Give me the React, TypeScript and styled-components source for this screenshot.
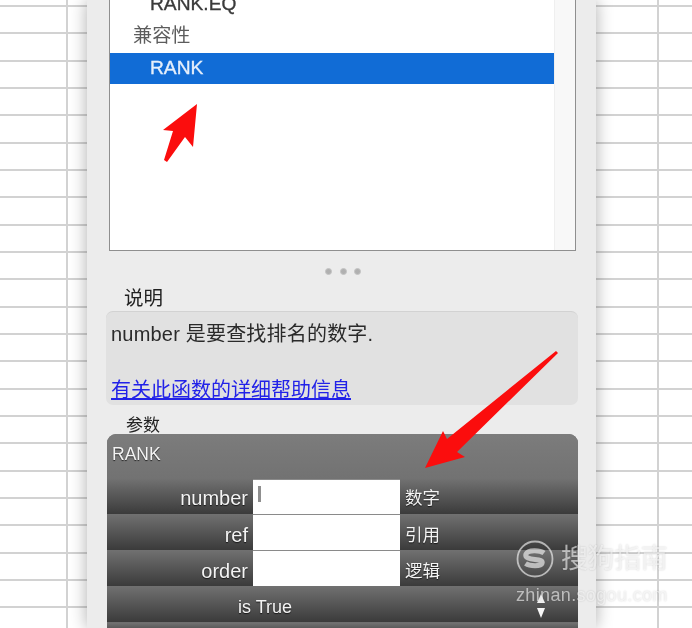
import React from 'react'
import styled, { createGlobalStyle } from 'styled-components'

const Global = createGlobalStyle`
  html, body {
    margin: 0;
    padding: 0;
    background: #fff;
  }
`;

const sans = `"Liberation Sans", "Noto Sans CJK SC", sans-serif`;
const line = '#d2d2d2';

const Sheet = styled.div`
  position: relative;
  width: 692px;
  height: 628px;
  overflow: hidden;
  display: flex;
  justify-content: flex-start;
  padding-left: 87px;
  box-sizing: border-box;
  font-family: ${sans};
  background-color: #fff;
  background-image:
    linear-gradient(to right, transparent 66px, ${line} 66px, ${line} 68px, transparent 68px, transparent 657px, ${line} 657px, ${line} 659px, transparent 659px),
    linear-gradient(to bottom,
      transparent 5px, ${line} 5px, ${line} 7px, transparent 7px,
      transparent 32px, ${line} 32px, ${line} 34px, transparent 34px,
      transparent 60px, ${line} 60px, ${line} 62px, transparent 62px);
  background-size: 100% 100%, 100% 82px;
  background-repeat: no-repeat, repeat-y;
  filter: blur(0.45px);
`;

const Panel = styled.div`
  width: 509px;
  height: 628px;
  flex-shrink: 0;
  background: #ececec;
  box-shadow: 0 0 16px rgba(0, 0, 0, 0.32);
  display: flex;
  flex-direction: column;
  padding: 0 18px 0 19px;
  box-sizing: border-box;
`;

const ListBox = styled.div`
  margin-left: 3px;
  width: 467px;
  height: 251px;
  flex-shrink: 0;
  box-sizing: border-box;
  background: #fff;
  border: solid #8f8f8f;
  border-width: 0 1.5px 1.5px 1.5px;
  display: flex;
  overflow: hidden;
`;

const ListColumn = styled.div`
  flex: 1;
  display: flex;
  flex-direction: column;
  min-width: 0;
`;

const Scrollbar = styled.div`
  width: 20px;
  background: #f8f8f8;
  border-left: 1px solid #efefef;
`;

const ListRow = styled.div<{ $kind: 'item' | 'group' | 'selected'; $height: number }>`
  height: ${p => p.$height}px;
  display: flex;
  align-items: center;
  box-sizing: border-box;
  flex-shrink: 0;
  padding-left: ${p => (p.$kind === 'group' ? 23 : 40)}px;
  padding-bottom: ${p => (p.$kind === 'group' ? 3 : 0)}px;
  font-size: 19.2px;
  -webkit-text-stroke: ${p => (p.$kind === 'group' ? 0 : 0.35)}px currentColor;
  color: ${p => (p.$kind === 'selected' ? '#e6effb' : p.$kind === 'group' ? '#5c5c5c' : '#3a3a3a')};
  background: ${p => (p.$kind === 'selected' ? '#116cd6' : 'transparent')};
`;

const TopRow = styled(ListRow)`
  margin-top: -10.5px;
`;

const Dots = styled.div`
  height: 40px;
  flex-shrink: 0;
  display: flex;
  justify-content: center;
  align-items: center;
  gap: 7.5px;
  margin-left: 2px;
`;

const Dot = styled.span`
  width: 7px;
  height: 7px;
  border-radius: 50%;
  background: #b0b0b0;
  border: 1px solid #c4c4c4;
  box-sizing: border-box;
`;

const SectionLabel = styled.div<{ $indent: number; $size: number; $height: number; $shift: number }>`
  height: ${p => p.$height}px;
  flex-shrink: 0;
  box-sizing: border-box;
  padding: ${p => Math.max(p.$shift, 0)}px 0 0 ${p => p.$indent}px;
  margin-top: ${p => Math.min(p.$shift, 0)}px;
  margin-bottom: ${p => -Math.min(p.$shift, 0)}px;
  font-size: ${p => p.$size}px;
  line-height: ${p => p.$height - Math.max(p.$shift, 0)}px;
  color: #222;
`;

const DescBox = styled.div`
  height: 94px;
  flex-shrink: 0;
  box-sizing: border-box;
  background: #e1e1e1;
  border-radius: 7px;
  border-top: 1px solid #d2d2d2;
  padding: 10px 5px 0 5px;
  font-size: 20px;
  color: #2a2a2a;
  display: flex;
  flex-direction: column;
  justify-content: space-between;
`;

const DescText = styled.div`
  line-height: 24px;
  letter-spacing: 0.2px;
`;

const HelpLink = styled.a`
  color: #2222e8;
  text-decoration: underline;
  line-height: 24px;
  margin-bottom: 3px;
`;

const Params = styled.div`
  margin-left: 1px;
  width: 471px;
  height: 194px;
  flex-shrink: 0;
  border-radius: 9px 9px 0 0;
  background: #6e6e6e;
  overflow: hidden;
  color: #f4f4f4;
  display: flex;
  flex-direction: column;
  text-shadow: 0 1px 1px rgba(0, 0, 0, 0.7);
`;

const ParamsTitle = styled.div`
  height: 45px;
  flex-shrink: 0;
  box-sizing: border-box;
  padding: 9px 0 0 5px;
  font-size: 17.5px;
  line-height: 22px;
  background: linear-gradient(to bottom, #7c7c7c, #727272);
`;

const ParamRow = styled.div<{ $height: number; $textLine: number }>`
  height: ${p => p.$height}px;
  flex-shrink: 0;
  display: grid;
  grid-template-columns: 146px 147px 1fr;
  align-items: stretch;
  line-height: ${p => p.$textLine}px;
  background: linear-gradient(to bottom, #717171, #3b3b3b);
  box-sizing: border-box;
`;

const ParamName = styled.div`
  text-align: right;
  padding-right: 5px;
  font-size: 20px;
`;

const ParamInput = styled.div`
  background: #fff;
  background-clip: padding-box;
  border: solid #8a8a8a;
  border-width: 1px 0;
  display: flex;
  align-items: flex-start;
  padding: 6px 0 0 5px;
  box-sizing: border-box;
`;

const Caret = styled.span`
  width: 3px;
  height: 16px;
  background: #8f8f8f;
`;

const ParamHint = styled.div`
  padding-left: 5px;
  font-size: 17.5px;
`;

const TrueRow = styled.div`
  height: 36px;
  flex-shrink: 0;
  display: flex;
  justify-content: space-between;
  background: linear-gradient(to bottom, #717171, #3b3b3b);
  margin-bottom: 1px;
  box-sizing: border-box;
  font-size: 18px;
  line-height: 42px;
  padding: 0 31px 0 131px;
`;

const Stepper = styled.svg`
  width: 12px;
  height: 36px;
  flex-shrink: 0;
`;

const LastRow = styled.div`
  flex: 1;
  background: linear-gradient(to bottom, #717171, #5a5a5a);
`;

const Arrow = styled.svg`
  position: absolute;
  left: 0;
  top: 0;
  width: 692px;
  height: 628px;
  pointer-events: none;
`;

const Watermark = styled.div`
  position: absolute;
  left: 516px;
  top: 540px;
  color: rgba(255, 255, 255, 0.6);
  display: flex;
  flex-direction: column;
  gap: 7px;
  pointer-events: none;
  text-shadow: 0 0 2px rgba(0, 0, 0, 0.18);
`;

const WatermarkTop = styled.div`
  display: flex;
  align-items: center;
  gap: 7px;
`;

const WatermarkName = styled.div`
  font-size: 27px;
  line-height: 36px;
  letter-spacing: -0.4px;
`;

const WatermarkUrl = styled.div`
  font-size: 18px;
  line-height: 20px;
  letter-spacing: 0.35px;
`;

const params = [
  { name: 'number', hint: '数字', height: 35, textLine: 39, caret: true },
  { name: 'ref', hint: '引用', height: 36, textLine: 43, caret: false },
  { name: 'order', hint: '逻辑', height: 36, textLine: 43, caret: false },
];

const App = () => (
  <>
    <Global />
    <Sheet>
      <Panel>
        <ListBox>
          <ListColumn>
            <TopRow $kind="item" $height={28}>RANK.EQ</TopRow>
            <ListRow $kind="group" $height={35.5}>兼容性</ListRow>
            <ListRow $kind="selected" $height={30.5}>RANK</ListRow>
          </ListColumn>
          <Scrollbar />
        </ListBox>
        <Dots>
          <Dot />
          <Dot />
          <Dot />
        </Dots>
        <SectionLabel $indent={18} $size={19.5} $height={20} $shift={-3}>说明</SectionLabel>
        <DescBox>
          <DescText>number 是要查找排名的数字.</DescText>
          <HelpLink href="#">有关此函数的详细帮助信息</HelpLink>
        </DescBox>
        <SectionLabel $indent={20} $size={17} $height={29} $shift={13}>参数</SectionLabel>
        <Params>
          <ParamsTitle>RANK</ParamsTitle>
          {params.map(p => (
            <ParamRow key={p.name} $height={p.height} $textLine={p.textLine}>
              <ParamName>{p.name}</ParamName>
              <ParamInput>{p.caret && <Caret />}</ParamInput>
              <ParamHint>{p.hint}</ParamHint>
            </ParamRow>
          ))}
          <TrueRow>
            <span>is True</span>
            <Stepper viewBox="0 0 12 36">
              <path d="M6 8 L10 17 L2 17 Z" fill="#f2f2f2" />
              <path d="M2 22 L10 22 L6 32 Z" fill="#f6f6f6" />
            </Stepper>
          </TrueRow>
          <LastRow />
        </Params>
      </Panel>

      <Arrow viewBox="0 0 692 628">
        <path d="M197 104 L193 147 L185 137 L167 162 L164 160 L173 131 L163 130 Z" fill="#fb0d0d" />
        <path d="M558 353 L556 351 L447 439 L443 431 L425 468 L465 457 L457 452 Z" fill="#fb0d0d" />
      </Arrow>

      <Watermark>
        <WatermarkTop>
          <svg width="38" height="38" viewBox="0 0 38 38">
            <circle cx="19" cy="19" r="17.5" fill="none" stroke="currentColor" strokeWidth="1.8" />
            <path d="M28 13 C24 10 12 9.5 10 14 C8.5 18 14 19 19 19.5 C24 20 27 20.5 26 23.5 C25 26.5 14 26.5 9.5 23.5" fill="none" stroke="currentColor" strokeWidth="5" />
          </svg>
          <WatermarkName>搜狗指南</WatermarkName>
        </WatermarkTop>
        <WatermarkUrl>zhinan.sogou.com</WatermarkUrl>
      </Watermark>
    </Sheet>
  </>
)

export default App
